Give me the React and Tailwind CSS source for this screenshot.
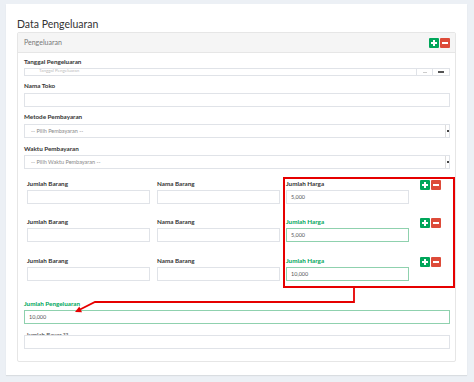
import React from 'react';

const font = { fontFamily: 'Lato, "Liberation Sans", sans-serif' };

function AddRemove() {
  return (
    <div className="flex gap-[1px]">
      <div className="w-[10px] h-[10px] bg-[#00a65a] rounded-[1px] flex items-center justify-center">
        <div className="relative w-[6px] h-[6px] flex items-center justify-center">
          <div className="w-[6px] h-[2px] bg-white" />
          <div className="absolute w-[2px] h-[6px] bg-white" />
        </div>
      </div>
      <div className="w-[10px] h-[10px] bg-[#dd4b39] rounded-[1px] flex items-center justify-center">
        <div className="w-[6px] h-[2px] bg-white" />
      </div>
    </div>
  );
}

function Label({ children, green }) {
  return (
    <div className={`h-[8px] leading-[8px] text-[6.3px] font-bold ${green ? 'text-[#00a65a]' : 'text-[#333]'}`}>
      {children}
    </div>
  );
}

function Input({ value, green, className = '' }) {
  return (
    <div
      className={`h-[14px] border bg-white flex items-center pl-[4px] text-[5.5px] text-[#555] ${
        green ? 'border-[#8fd1ae]' : 'border-[#e0e3e8]'
      } ${className}`}
    >
      {value}
    </div>
  );
}

function Select({ text }) {
  return (
    <div className="h-[14px] border border-[#e0e3e8] bg-white flex items-center justify-between pl-[6px]">
      <span className="text-[5.5px] text-[#888]">{text}</span>
      <div className="w-[4px] h-[12px] border-l border-[#ddd] flex items-center justify-center">
        <div className="w-[2px] h-[2px] bg-[#444]" />
      </div>
    </div>
  );
}

const harga = [
  { value: '5,000', green: false },
  { value: '5,000', green: true },
  { value: '10,000', green: true },
];

export default function App() {
  return (
    <div className="relative w-[474px] h-[382px] bg-[#ecf0f5] pt-[4px] pl-[6px] pr-[7px] overflow-hidden" style={font}>
      <div className="bg-white px-[11px] pt-[13px] pb-[13px] shadow-[0_1px_1px_rgba(0,0,0,0.08)]">
        <div className="text-[10.5px] leading-[14px] text-[#333] mb-[1px]">Data Pengeluaran</div>

        <div className="border border-[#e6e6e6] rounded-[2px]">
          <div className="h-[20px] bg-[#f5f5f5] border-b border-[#e6e6e6] flex items-center justify-between pl-[6px] pr-[5px]">
            <span className="text-[7px] text-[#777]">Pengeluaran</span>
            <AddRemove />
          </div>

          <div className="pl-[6px] pr-[5px] pt-[5px] pb-[12px]">
            <Label>Tanggal Pengeluaran</Label>
            <div className="mt-[2px] h-[8px] border border-[#e0e3e8] flex">
              <div className="flex-1 pl-[14px] text-[4.5px] leading-[4px] text-[#bbb] overflow-hidden">Tanggal Pengeluaran</div>
              <div className="w-[16px] border-l border-[#e0e3e8] flex items-center justify-center">
                <div className="w-[4px] h-[1px] bg-[#ccc]" />
              </div>
              <div className="w-[17px] border-l border-[#e0e3e8] flex items-center justify-center">
                <div className="w-[6px] h-[1.5px] bg-[#555]" />
              </div>
            </div>

            <div className="mt-[6px]">
              <Label>Nama Toko</Label>
            </div>
            <Input className="mt-[3px]" />

            <div className="mt-[6px]">
              <Label>Metode Pembayaran</Label>
            </div>
            <div className="mt-[3px]">
              <Select text="-- Pilih Pembayaran --" />
            </div>

            <div className="mt-[7px]">
              <Label>Waktu Pembayaran</Label>
            </div>
            <div className="mt-[2px]">
              <Select text="-- Pilih Waktu Pembayaran --" />
            </div>

            <div className="mt-[8px] flex items-start gap-[3px] -mr-[5px]">
              <div className="ml-[3px] pt-[3px] grid grid-cols-[123px_123px] gap-x-[7px]">
                {[0, 1, 2].map((i) => (
                  <React.Fragment key={i}>
                    <div className={i === 0 ? '' : i === 1 ? 'mt-[14px]' : 'mt-[15px]'}>
                      <div className="h-[10px]">
                        <Label>Jumlah Barang</Label>
                      </div>
                      <Input />
                    </div>
                    <div className={i === 0 ? '' : i === 1 ? 'mt-[14px]' : 'mt-[15px]'}>
                      <div className="h-[10px]">
                        <Label>Nama Barang</Label>
                      </div>
                      <Input />
                    </div>
                  </React.Fragment>
                ))}
              </div>

              <div className="w-[172px] border-2 border-[#e60000] pl-[1px] pr-[12px] pt-[1px] pb-[5px]">
                {harga.map((h, i) => (
                  <div key={i} className={`flex items-start justify-between ${i === 0 ? '' : i === 1 ? 'mt-[14px]' : 'mt-[15px]'}`}>
                    <div className="w-[123px]">
                      <div className="h-[10px]">
                        <Label green={h.green}>Jumlah Harga</Label>
                      </div>
                      <Input value={h.value} green={h.green} />
                    </div>
                    <AddRemove />
                  </div>
                ))}
              </div>
            </div>

            <div className="mt-[12px]">
              <Label green>Jumlah Pengeluaran</Label>
            </div>
            <Input className="mt-[2px]" value="10,000" green />

            <div className="mt-[7px] h-[4px] overflow-hidden text-[6px] leading-[8px] font-bold text-[#666] pl-[2px]">
              Jumlah Bayar ??
            </div>
            <Input />
          </div>
        </div>
      </div>

      <svg className="absolute inset-0 pointer-events-none" width="474" height="382" viewBox="0 0 474 382">
        <polyline points="354,288 354,302 95,302 80,309.5" fill="none" stroke="#e60000" strokeWidth="1.8" />
        <polygon points="75,312 82,312.2 79.3,306.4" fill="#e60000" />
      </svg>
    </div>
  );
}
